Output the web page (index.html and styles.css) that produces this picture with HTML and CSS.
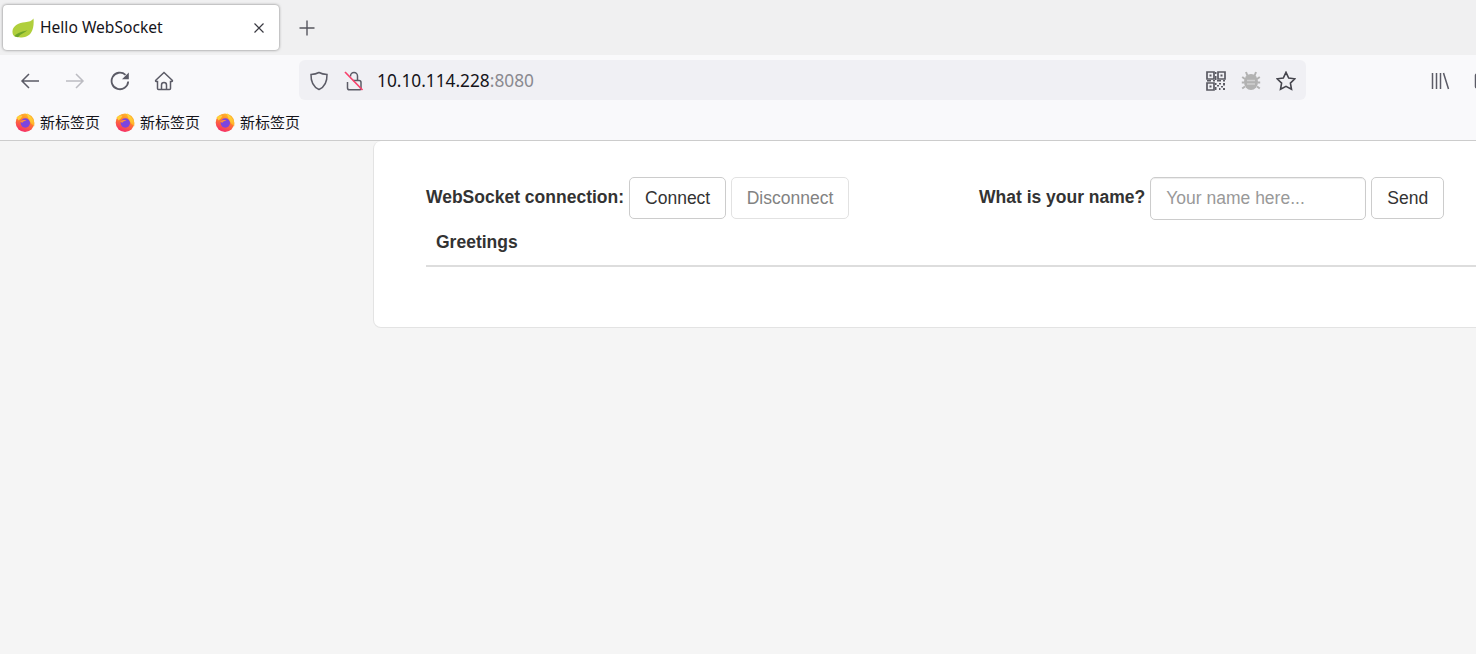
FILE: index.html
```html
<!DOCTYPE html>
<html lang="en">
<head>
<meta charset="utf-8">
<title>Hello WebSocket</title>
<link rel="stylesheet" href="styles.css">
</head>
<body>
<svg class="defs" width="0" height="0" aria-hidden="true">
  <defs>
    <linearGradient id="ffOuter" x1="0.7" y1="0" x2="0.3" y2="1">
      <stop offset="0" stop-color="#ffc02c"/><stop offset="0.45" stop-color="#ff7a2e"/><stop offset="1" stop-color="#f5276e"/>
    </linearGradient>
    <linearGradient id="ffFlame" x1="0.5" y1="0" x2="0.5" y2="1">
      <stop offset="0" stop-color="#ffe53b"/><stop offset="1" stop-color="#ffab2a"/>
    </linearGradient>
    <symbol id="firefox" viewBox="0 0 20 20">
      <circle cx="10" cy="10.700" r="9.300" fill="url(#ffOuter)"/>
      <path d="M12 .3c.6 2.800 3 3.500 5 5.700 2 2.300 2.800 5.400 2.200 8.200-1.200-1.200-2.600-2-3.600-3.700-1.500-2.500-3.400-5.600-3.600-10.200z" fill="url(#ffFlame)"/>
      <path d="M1.500 5.500c1.600-1.800 3.800-2.300 6-1.600L6 6.300 3.500 8.500z" fill="#ffcf3a"/>
      <circle cx="10.300" cy="11" r="4.700" fill="#7d45dd"/>
      <path d="M5 9.500c2-1.500 4.500-1.800 6.500-1-1.500.4-3.500.9-4 2.200C6.500 10.500 5.700 10.100 5 9.500z" fill="#ff8a3a"/>
    </symbol>
  </defs>
</svg>

<header class="chrome">
  <div class="tabbar">
    <div class="tab">
      <svg class="favicon" viewBox="0 0 22 20" width="22" height="20">
        <path d="M21.500 .5C20 3 17 3.800 13 4.200 7 4.800 1 7.500.5 13c-.2 2.300.6 4.200 2 5.300C7 20.300 15.500 20 19 14.700 21.500 11 22 5.500 21.500 .5z" fill="#b0cf3c"/>
        <path d="M2.500 18.300C4 15.800 8 14 15.500 12.300 12.500 14.800 8.500 16 6 19.200c-1.400-.1-2.600-.4-3.500-.9z" fill="#6ea52a"/>
      </svg>
      <span class="tab-title">Hello WebSocket</span>
      <svg class="tab-close" viewBox="0 0 12 12" width="12" height="12">
        <path d="M1.500 1.500l9 9M10.500 1.500l-9 9" stroke="#3a3a42" stroke-width="1.200" fill="none"/>
      </svg>
    </div>
    <svg class="newtab" viewBox="0 0 16 16" width="16" height="16">
      <path d="M8 .5v15M.5 8h15" stroke="#55555e" stroke-width="1.400" fill="none"/>
    </svg>
  </div>

  <nav class="navbar">
    <span class="nav-btn">
      <svg viewBox="0 0 20 20" width="20" height="20"><path d="M19 10H2M9 3l-7 7 7 7" class="ico"/></svg>
    </span>
    <span class="nav-btn">
      <svg viewBox="0 0 20 20" width="20" height="20"><path d="M1 10h17M11 3l7 7-7 7" class="ico ico-off"/></svg>
    </span>
    <span class="nav-btn">
      <svg viewBox="0 0 20 20" width="20" height="20"><path d="M18.200 10.500A8.300 8.300 0 1 1 15.500 3.800" class="ico ico-thick"/><path d="M18.800 1.500v6.800h-6.800z" fill="#5b5b66"/></svg>
    </span>
    <span class="nav-btn nav-home">
      <svg viewBox="0 0 20 20" width="20" height="20"><path d="M10 1.500L1.800 9.200c-.5.500-.3 1.300.5 1.300h1.200v7c0 .6.400 1 1 1h11c.6 0 1-.4 1-1v-7h1.200c.8 0 1-.8.5-1.300zM7.500 18.500v-4.500a2.500 2.500 0 0 1 5 0v4.500" class="ico"/></svg>
    </span>

    <div class="urlbar">
      <svg class="url-shield" viewBox="0 0 20 20" width="20" height="20"><path d="M10 1.500c2.600 1.300 5 1.800 8 2 .2 7.300-2.300 12.500-8 15-5.700-2.500-8.200-7.700-8-15 3-.2 5.400-.7 8-2z" class="ico"/></svg>
      <svg class="url-lock" viewBox="0 0 20 20" width="20" height="20">
        <path d="M6.500 5.500V5a3.500 3.500 0 0 1 7 0v4.500M9 9.500h6c1.200 0 2 .8 2 2v5.500c0 1-.6 1.800-1.800 1.800H5.500c-1.200 0-2-.8-2-1.800v-6" class="ico"/>
        <path d="M1 1l17.500 18" stroke="#f8416c" stroke-width="1.700" fill="none"/>
      </svg>
      <span class="url-text">10.10.114.228<span class="url-port">:8080</span></span>
      <svg class="url-qr" viewBox="0 0 20 20" width="20" height="20">
        <path d="M1 1h7v7H1zM12 1h7v7h-7zM1 12h7v7H1z" fill="none" stroke="#5a5a62" stroke-width="1.700"/>
        <path d="M3.500 3.500h2v2h-2zM14.500 3.500h2v2h-2zM3.500 14.500h2v2h-2zM9 1h1.500v2H9zM9 5h1.500v4H9zM1 9h4v1.500H1zM7 9h2v1.500H7zM11 9h4v1.500h-4zM17 9h2v1.500h-2zM9 12h1.500v2H9zM13 12h2v1.500h-2zM17 12h2v2.500h-2zM11 14h2v1.500h-2zM15 15h2v1.500h-2zM9 16h1.500v3H9zM13 17h1.500v2H13zM17 17h2v2h-2z" fill="#5a5a62"/>
      </svg>
      <svg class="url-bug" viewBox="0 0 20 20" width="20" height="20">
        <path d="M6.500 5L5 1M13.500 5L15 1M4 8L1.200 6M16 8l2.800-2M3.500 11.500H.8M16.500 11.500h2.700M4 15.500l-2.800 2M16 15.500l2.800 2" stroke="#b2b2b2" stroke-width="2" fill="none"/>
        <ellipse cx="10" cy="11" rx="7" ry="8" fill="#b2b2b2"/>
        <path d="M6 9.500h8M6 13h8" stroke="#cfcfd0" stroke-width="1.500" fill="none"/>
      </svg>
      <svg class="url-star" viewBox="0 0 20 20" width="20" height="20"><path d="M10 1.300l2.700 5.700 6.200.8-4.500 4.300 1.100 6.200-5.500-3-5.500 3 1.100-6.200L1.100 7.800l6.200-.8z" class="ico ico-dark"/></svg>
    </div>

    <span class="nav-btn nav-library">
      <svg viewBox="0 0 20 20" width="20" height="20"><path d="M2.500 2v16M6.500 2v16M10.500 2v16M13.500 2l5 16" class="ico"/></svg>
    </span>
    <span class="nav-btn nav-side">
      <svg viewBox="0 0 20 20" width="20" height="20"><path d="M3 3h14c1 0 1.500.7 1.500 1.500v11c0 1-.5 1.500-1.500 1.500H3c-1 0-1.500-.5-1.500-1.500v-11C1.500 3.700 2 3 3 3zM7 3v14" class="ico"/></svg>
    </span>
  </nav>

  <div class="bookmarks">
    <span class="bookmark"><svg class="bm-icon"><use href="#firefox"/></svg><span>新标签页</span></span>
    <span class="bookmark"><svg class="bm-icon"><use href="#firefox"/></svg><span>新标签页</span></span>
    <span class="bookmark"><svg class="bm-icon"><use href="#firefox"/></svg><span>新标签页</span></span>
  </div>
</header>

<main class="content">
  <section class="card">
    <div class="forms">
      <form class="form-inline">
        <label class="label">WebSocket connection:</label>
        <button type="button" class="btn btn-connect">Connect</button>
        <button type="button" class="btn btn-disconnect" disabled>Disconnect</button>
      </form>
      <form class="form-inline">
        <label class="label">What is your name?</label>
        <input class="input" type="text" placeholder="Your name here...">
        <button type="button" class="btn btn-send">Send</button>
      </form>
    </div>
    <table class="table">
      <thead><tr><th>Greetings</th></tr></thead>
    </table>
  </section>
</main>
</body>
</html>
```

FILE: styles.css
```css
* { box-sizing: border-box; }
html, body { margin: 0; height: 100%; overflow: hidden; }
body { width: 1476px; height: 654px; background: #f5f5f5; display: flex; flex-direction: column; font-family: "Liberation Sans", Arial, sans-serif; color: #333; }
.defs { display: block; height: 0; }

.chrome { flex: none; }
.tabbar { height: 55px; background: #f0f0f1; display: flex; align-items: flex-start; padding: 5px 0 0 3px; }
.tab { width: 276px; height: 45px; background: #fff; border-radius: 4px; box-shadow: 0 0 3px rgba(0,0,0,.5); display: flex; align-items: center; padding: 0 14px 0 9px; }
.favicon { flex: none; margin-right: 6px; margin-top: 1px; }
.tab-title { flex: 1; font: 15.600px "Noto Sans", sans-serif; line-height: 20px; margin-top: -1px; color: #15141a; white-space: nowrap; }
.tab-close { flex: none; }
.newtab { flex: none; margin: 15px 0 0 20px; }

.navbar { height: 50px; background: #f9f9fb; display: flex; align-items: center; padding-left: 7px; overflow: hidden; }
.nav-btn { flex: none; width: 45px; height: 40px; display: flex; align-items: center; justify-content: center; margin-top: 2px; }
.nav-home { padding-right: 1px; }
.ico { fill: none; stroke: #5b5b66; stroke-width: 1.500; }
.ico-off { stroke: #bcbcc2; }
.ico-thick { stroke-width: 1.800; }
.ico-dark { stroke: #45454d; stroke-width: 1.600; }
.urlbar { flex: none; width: 1007px; height: 40px; margin: 0 0 0 112px; background: #f0f0f4; border-radius: 6px; display: flex; align-items: center; padding: 1px 10px 0 10px; }
.url-shield, .url-lock, .url-qr, .url-bug, .url-star { flex: none; }
.url-lock { margin-left: 15px; }
.url-text { flex: 1; margin-left: 13px; font: 17.300px "Noto Sans", sans-serif; line-height: 22px; color: #15141a; white-space: nowrap; }
.url-port { color: #8a8a90; }
.url-bug, .url-star { margin-left: 15px; }
.nav-library { margin-left: 111px; }
.nav-side { justify-content: flex-start; padding-left: 12px; }

.bookmarks { height: 36px; background: #f9f9fb; border-bottom: 1px solid #ccc; display: flex; align-items: center; padding: 0 0 2px 15px; }
.bookmark { width: 100px; display: flex; align-items: center; font: 15px "Noto Sans CJK SC", "Noto Sans", sans-serif; color: #15141a; white-space: nowrap; }
.bm-icon { width: 20px; height: 20px; flex: none; margin-right: 5px; }

.content { flex: 1; padding-left: 373px; overflow: hidden; }
.card { width: 1300px; height: 187px; background: #fff; border: 1px solid #e3e3e3; border-top: 0; border-radius: 8px; padding: 36px 0 0 52px; }
.forms { display: grid; grid-template-columns: 553px auto; }
.form-inline { display: flex; align-items: flex-start; }
.label { font-weight: 700; font-size: 17.500px; line-height: 40px; margin-right: 5px; color: #333; white-space: nowrap; }
.btn { height: 42px; padding: 0 15px; font: 17.500px "Liberation Sans", Arial, sans-serif; color: #333; background: #fff; border: 1px solid #ccc; border-radius: 5px; margin-right: 5px; }
.btn-disconnect { color: #828282; border-color: #e2e2e2; padding: 0 14.500px; }
.input { width: 216px; height: 43px; padding: 0 15px; font: 17.500px "Liberation Sans", Arial, sans-serif; border: 1px solid #ccc; border-radius: 5px; margin-right: 5px; box-shadow: inset 0 1px 1px rgba(0,0,0,.075); }
.input::placeholder { color: #999; opacity: 1; }
.table { width: 100%; border-collapse: collapse; margin-top: 1px; }
.table th { text-align: left; font-size: 17.500px; line-height: 25px; padding: 9px 10px 10px; border-bottom: 2px solid #ddd; color: #333; }
```
